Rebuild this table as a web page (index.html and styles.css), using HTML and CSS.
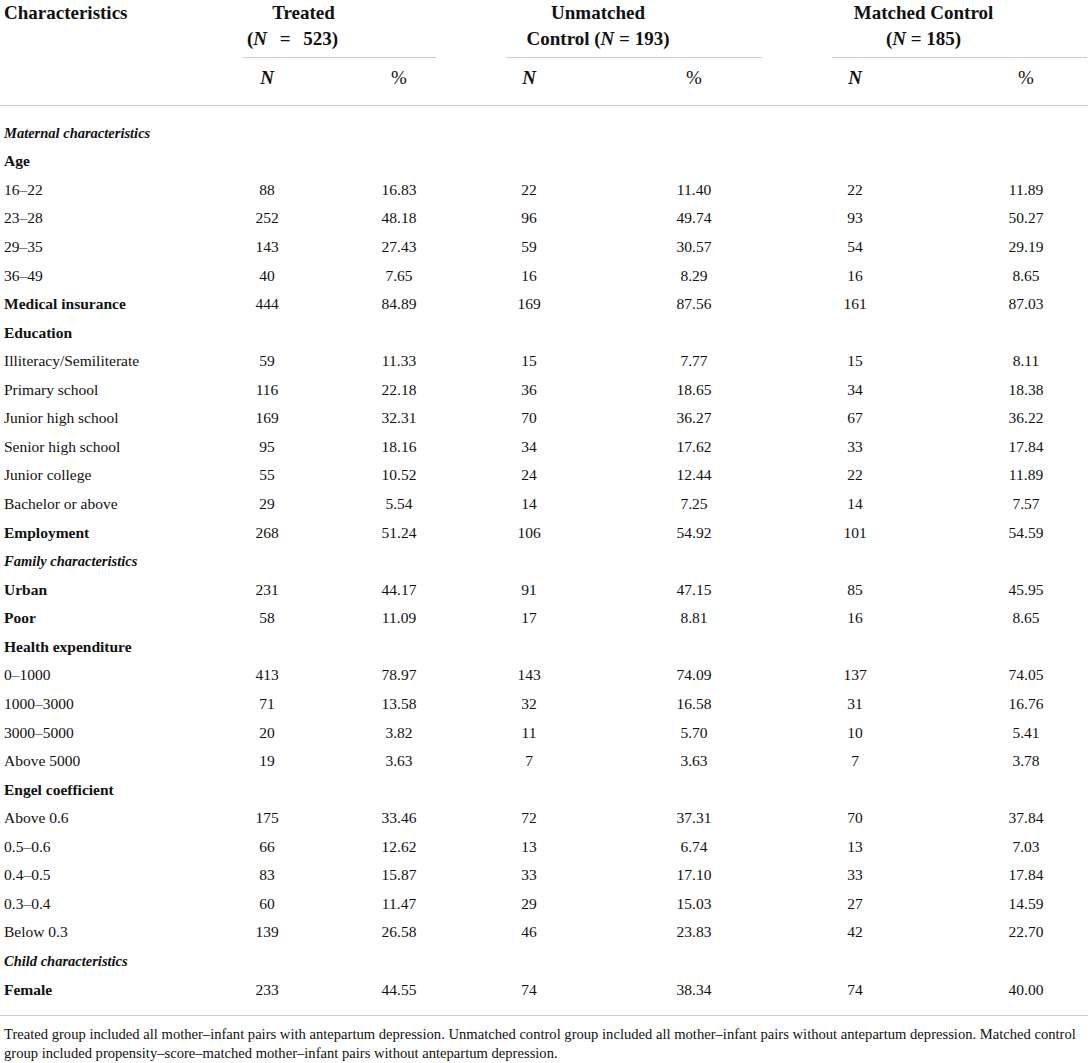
FILE: index.html
```html
<!DOCTYPE html>
<html lang="en">
<head>
<meta charset="utf-8">
<title>Characteristics table</title>
<link rel="stylesheet" href="styles.css">
</head>
<body>
<div class="wrap">
<table class="tbl">
  <colgroup>
    <col class="c0"><col class="c1"><col class="c2"><col class="c3"><col class="c4"><col class="c5"><col class="c6">
  </colgroup>
  <thead>
    <tr class="h1">
      <th class="lab" rowspan="2">Characteristics</th>
      <th colspan="2" class="grp"><div class="gl g1"><span class="ln">Treated</span><span class="ln l2">(<i>N</i> = 523)</span></div></th>
      <th colspan="2" class="grp"><div class="gl g2"><span class="ln">Unmatched</span><span class="ln">Control (<i>N</i> = 193)</span></div></th>
      <th colspan="2" class="grp"><div class="gl g3"><span class="ln">Matched Control</span><span class="ln">(<i>N</i> = 185)</span></div></th>
    </tr>
    <tr class="h2">
      <th class="n"><i>N</i></th><th class="p">%</th>
      <th class="n"><i>N</i></th><th class="p">%</th>
      <th class="n"><i>N</i></th><th class="p last">%</th>
    </tr>
  </thead>
  <tbody>
    <tr class="first"><td class="sec" colspan="7">Maternal characteristics</td></tr>
    <tr><td class="bold" colspan="7">Age</td></tr>
    <tr><td>16–22</td><td>88</td><td>16.83</td><td>22</td><td>11.40</td><td>22</td><td class="last">11.89</td></tr>
    <tr><td>23–28</td><td>252</td><td>48.18</td><td>96</td><td>49.74</td><td>93</td><td class="last">50.27</td></tr>
    <tr><td>29–35</td><td>143</td><td>27.43</td><td>59</td><td>30.57</td><td>54</td><td class="last">29.19</td></tr>
    <tr><td>36–49</td><td>40</td><td>7.65</td><td>16</td><td>8.29</td><td>16</td><td class="last">8.65</td></tr>
    <tr><td class="bold">Medical insurance</td><td>444</td><td>84.89</td><td>169</td><td>87.56</td><td>161</td><td class="last">87.03</td></tr>
    <tr><td class="bold" colspan="7">Education</td></tr>
    <tr><td>Illiteracy/Semiliterate</td><td>59</td><td>11.33</td><td>15</td><td>7.77</td><td>15</td><td class="last">8.11</td></tr>
    <tr><td>Primary school</td><td>116</td><td>22.18</td><td>36</td><td>18.65</td><td>34</td><td class="last">18.38</td></tr>
    <tr><td>Junior high school</td><td>169</td><td>32.31</td><td>70</td><td>36.27</td><td>67</td><td class="last">36.22</td></tr>
    <tr><td>Senior high school</td><td>95</td><td>18.16</td><td>34</td><td>17.62</td><td>33</td><td class="last">17.84</td></tr>
    <tr><td>Junior college</td><td>55</td><td>10.52</td><td>24</td><td>12.44</td><td>22</td><td class="last">11.89</td></tr>
    <tr><td>Bachelor or above</td><td>29</td><td>5.54</td><td>14</td><td>7.25</td><td>14</td><td class="last">7.57</td></tr>
    <tr><td class="bold">Employment</td><td>268</td><td>51.24</td><td>106</td><td>54.92</td><td>101</td><td class="last">54.59</td></tr>
    <tr><td class="sec" colspan="7">Family characteristics</td></tr>
    <tr><td class="bold">Urban</td><td>231</td><td>44.17</td><td>91</td><td>47.15</td><td>85</td><td class="last">45.95</td></tr>
    <tr><td class="bold">Poor</td><td>58</td><td>11.09</td><td>17</td><td>8.81</td><td>16</td><td class="last">8.65</td></tr>
    <tr><td class="bold" colspan="7">Health expenditure</td></tr>
    <tr><td>0–1000</td><td>413</td><td>78.97</td><td>143</td><td>74.09</td><td>137</td><td class="last">74.05</td></tr>
    <tr><td>1000–3000</td><td>71</td><td>13.58</td><td>32</td><td>16.58</td><td>31</td><td class="last">16.76</td></tr>
    <tr><td>3000–5000</td><td>20</td><td>3.82</td><td>11</td><td>5.70</td><td>10</td><td class="last">5.41</td></tr>
    <tr><td>Above 5000</td><td>19</td><td>3.63</td><td>7</td><td>3.63</td><td>7</td><td class="last">3.78</td></tr>
    <tr><td class="bold" colspan="7">Engel coefficient</td></tr>
    <tr><td>Above 0.6</td><td>175</td><td>33.46</td><td>72</td><td>37.31</td><td>70</td><td class="last">37.84</td></tr>
    <tr><td>0.5–0.6</td><td>66</td><td>12.62</td><td>13</td><td>6.74</td><td>13</td><td class="last">7.03</td></tr>
    <tr><td>0.4–0.5</td><td>83</td><td>15.87</td><td>33</td><td>17.10</td><td>33</td><td class="last">17.84</td></tr>
    <tr><td>0.3–0.4</td><td>60</td><td>11.47</td><td>29</td><td>15.03</td><td>27</td><td class="last">14.59</td></tr>
    <tr><td>Below 0.3</td><td>139</td><td>26.58</td><td>46</td><td>23.83</td><td>42</td><td class="last">22.70</td></tr>
    <tr><td class="sec" colspan="7">Child characteristics</td></tr>
    <tr class="final"><td class="bold">Female</td><td>233</td><td>44.55</td><td>74</td><td>38.34</td><td>74</td><td class="last">40.00</td></tr>
  </tbody>
</table>
<p class="note">Treated group included all mother–infant pairs with antepartum depression. Unmatched control group included all mother–infant pairs without antepartum depression. Matched control group included propensity–score–matched mother–infant pairs without antepartum depression.</p>
</div>
</body>
</html>
```

FILE: styles.css
```css
html, body {
  margin: 0;
  padding: 0;
  background: #ffffff;
}

body {
  font-family: "Liberation Serif", "Times New Roman", serif;
  color: #111111;
}

.wrap {
  width: 1088px;
}

.tbl {
  width: 1088px;
  table-layout: fixed;
  border-collapse: collapse;
  font-size: 15.5px;
}

.c0 { width: 200px; }
.c1 { width: 134px; }
.c2 { width: 130px; }
.c3 { width: 130px; }
.c4 { width: 200px; }
.c5 { width: 122px; }
.c6 { width: 172px; }

.tbl th,
.tbl td {
  padding: 0;
  text-align: center;
  vertical-align: top;
}

.tbl thead {
  border-bottom: 1px solid #cfcfcf;
}

.tbl th {
  font-weight: bold;
  font-size: 19px;
  line-height: 26px;
}

.tbl th.lab {
  text-align: left;
  padding-left: 4px;
}

.gl {
  border-bottom: 1px solid #cfcfcf;
  padding-right: 72px;
  padding-bottom: 5px;
  text-align: center;
}

.ln {
  display: block;
  white-space: nowrap;
}

.l2 {
  padding-right: 22px;
  word-spacing: 8px;
}

.g1 { margin: 0 28px 0 43px; }
.g2 { margin: 0 32px 0 42px; }
.g3 { margin: 0 1px 0 38px; }

.h2 th {
  padding-top: 7px;
  padding-bottom: 14px;
}

.h2 th.p {
  font-weight: normal;
}

.tbl th.last,
.tbl td.last {
  padding-left: 48px;
}

.tbl td {
  line-height: 28.57px;
}

.tbl td:first-child {
  text-align: left;
  padding-left: 4px;
}

.tbl td.bold {
  font-weight: bold;
}

.tbl td.sec {
  font-weight: bold;
  font-style: italic;
  font-size: 14.5px;
}

.tbl tr.first td {
  padding-top: 12.7px;
}

.tbl tr.final td {
  padding-bottom: 10.7px;
}

.tbl tbody {
  border-bottom: 1px solid #cfcfcf;
}

.note {
  margin: 0;
  padding: 9.5px 0 0 4px;
  font-size: 14.6px;
  line-height: 19px;
}
```
